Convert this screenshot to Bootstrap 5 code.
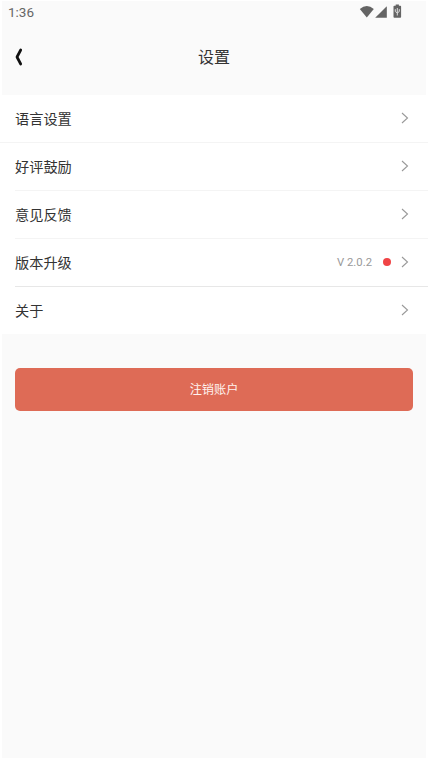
<!DOCTYPE html>
<html lang="zh-CN">
<head>
<meta charset="utf-8">
<meta name="viewport" content="width=device-width, initial-scale=1">
<title>设置</title>
<link href="https://cdn.jsdelivr.net/npm/bootstrap@5.3.0/dist/css/bootstrap.min.css" rel="stylesheet">
<style>
body { font-family: Roboto, "Noto Sans CJK SC", sans-serif; background: #fff; color: #333; }
.screen { height: 760px; background: #fafafa; border: solid #fff; border-width: 1px 2px 2px; }
.status { height: 22px; padding: 0 21px 0 6px; font-size: 13.5px; line-height: 22px; color: #666; }
.topbar { height: 72px; padding-bottom: 4px; }
.topbar .side { width: 56px; padding-left: 11px; }
.topbar h1 { font-size: 16px; line-height: 24px; padding-top: 2px; }
.settings { margin: 0 -2px; background: #fff; }
.settings .entry { height: 48px; padding: 0 18px 1px 0; margin-left: 15px; border-bottom: 1px solid #f4f4f4; font-size: 14.2px; line-height: 20px; }
.settings .entry .name { padding-top: 2px; }
.settings .entry:first-child { margin-left: 0; padding-left: 15px; }
.settings .entry:nth-child(4) { border-bottom-color: #e7e7e7; }
.settings .entry:last-child { border-bottom: 0; height: 47px; }
.version { font-size: 11.3px; color: #999; margin-right: 11px; padding-top: 1px; }
.dot { width: 8px; height: 8px; background: #f04446; margin-right: 9px; }
.closing { margin: 34px 13px 0; }
.closing .btn { height: 43px; border: 0; border-radius: 5px; background: #de6b56; color: #fff3f0; font-size: 12.2px; line-height: 18px; padding: 0; }
svg { display: block; }
</style>
</head>
<body>
<main class="screen d-flex flex-column">
  <div class="status d-flex align-items-center justify-content-between">
    <span>1:36</span>
    <svg width="46" height="16" viewBox="0 0 46 16" fill="#646464">
      <path d="M.8 5Q7.8-.8 14.8 5L7.8 13.5Z"/>
      <path d="M27.8 2.3V13.8H16.2Z"/>
      <path d="M36.7 .5h3.2v1.2h1.4q.8 0 .8.8v10.3q0 .9-.8.9h-6q-.8 0-.8-.9V2.5q0-.8.8-.8h1.4Z"/>
      <path d="M38.3 4v7.5M36.3 5.2v2.3l2 1.5 2-1.5V5.2" fill="none" stroke="#ddd" stroke-width="1"/>
    </svg>
  </div>
  <header class="topbar d-flex align-items-center justify-content-between">
    <div class="side">
      <svg width="12" height="20" viewBox="0 0 12 20" fill="none" stroke="#111" stroke-width="2.7" stroke-linecap="round" stroke-linejoin="round"><path d="M7.7 3 4 10 7.7 17"/></svg>
    </div>
    <h1 class="m-0 fw-normal">设置</h1>
    <div class="side"></div>
  </header>
  <section class="settings">
    <div class="entry d-flex align-items-center"><span class="name me-auto">语言设置</span><svg width="10" height="12" viewBox="0 0 10 12" fill="none" stroke="#999" stroke-width="1.1"><path d="m2 1 5.5 5L2 11"/></svg></div>
    <div class="entry d-flex align-items-center"><span class="name me-auto">好评鼓励</span><svg width="10" height="12" viewBox="0 0 10 12" fill="none" stroke="#999" stroke-width="1.1"><path d="m2 1 5.5 5L2 11"/></svg></div>
    <div class="entry d-flex align-items-center"><span class="name me-auto">意见反馈</span><svg width="10" height="12" viewBox="0 0 10 12" fill="none" stroke="#999" stroke-width="1.1"><path d="m2 1 5.5 5L2 11"/></svg></div>
    <div class="entry d-flex align-items-center"><span class="name me-auto">版本升级</span><span class="version">V 2.0.2</span><span class="dot rounded-circle"></span><svg width="10" height="12" viewBox="0 0 10 12" fill="none" stroke="#999" stroke-width="1.1"><path d="m2 1 5.5 5L2 11"/></svg></div>
    <div class="entry d-flex align-items-center"><span class="name me-auto">关于</span><svg width="10" height="12" viewBox="0 0 10 12" fill="none" stroke="#999" stroke-width="1.1"><path d="m2 1 5.5 5L2 11"/></svg></div>
  </section>
  <div class="closing"><button type="button" class="btn w-100">注销账户</button></div>
</main>
<script src="https://cdn.jsdelivr.net/npm/bootstrap@5.3.0/dist/js/bootstrap.bundle.min.js"></script>
</body>
</html>
